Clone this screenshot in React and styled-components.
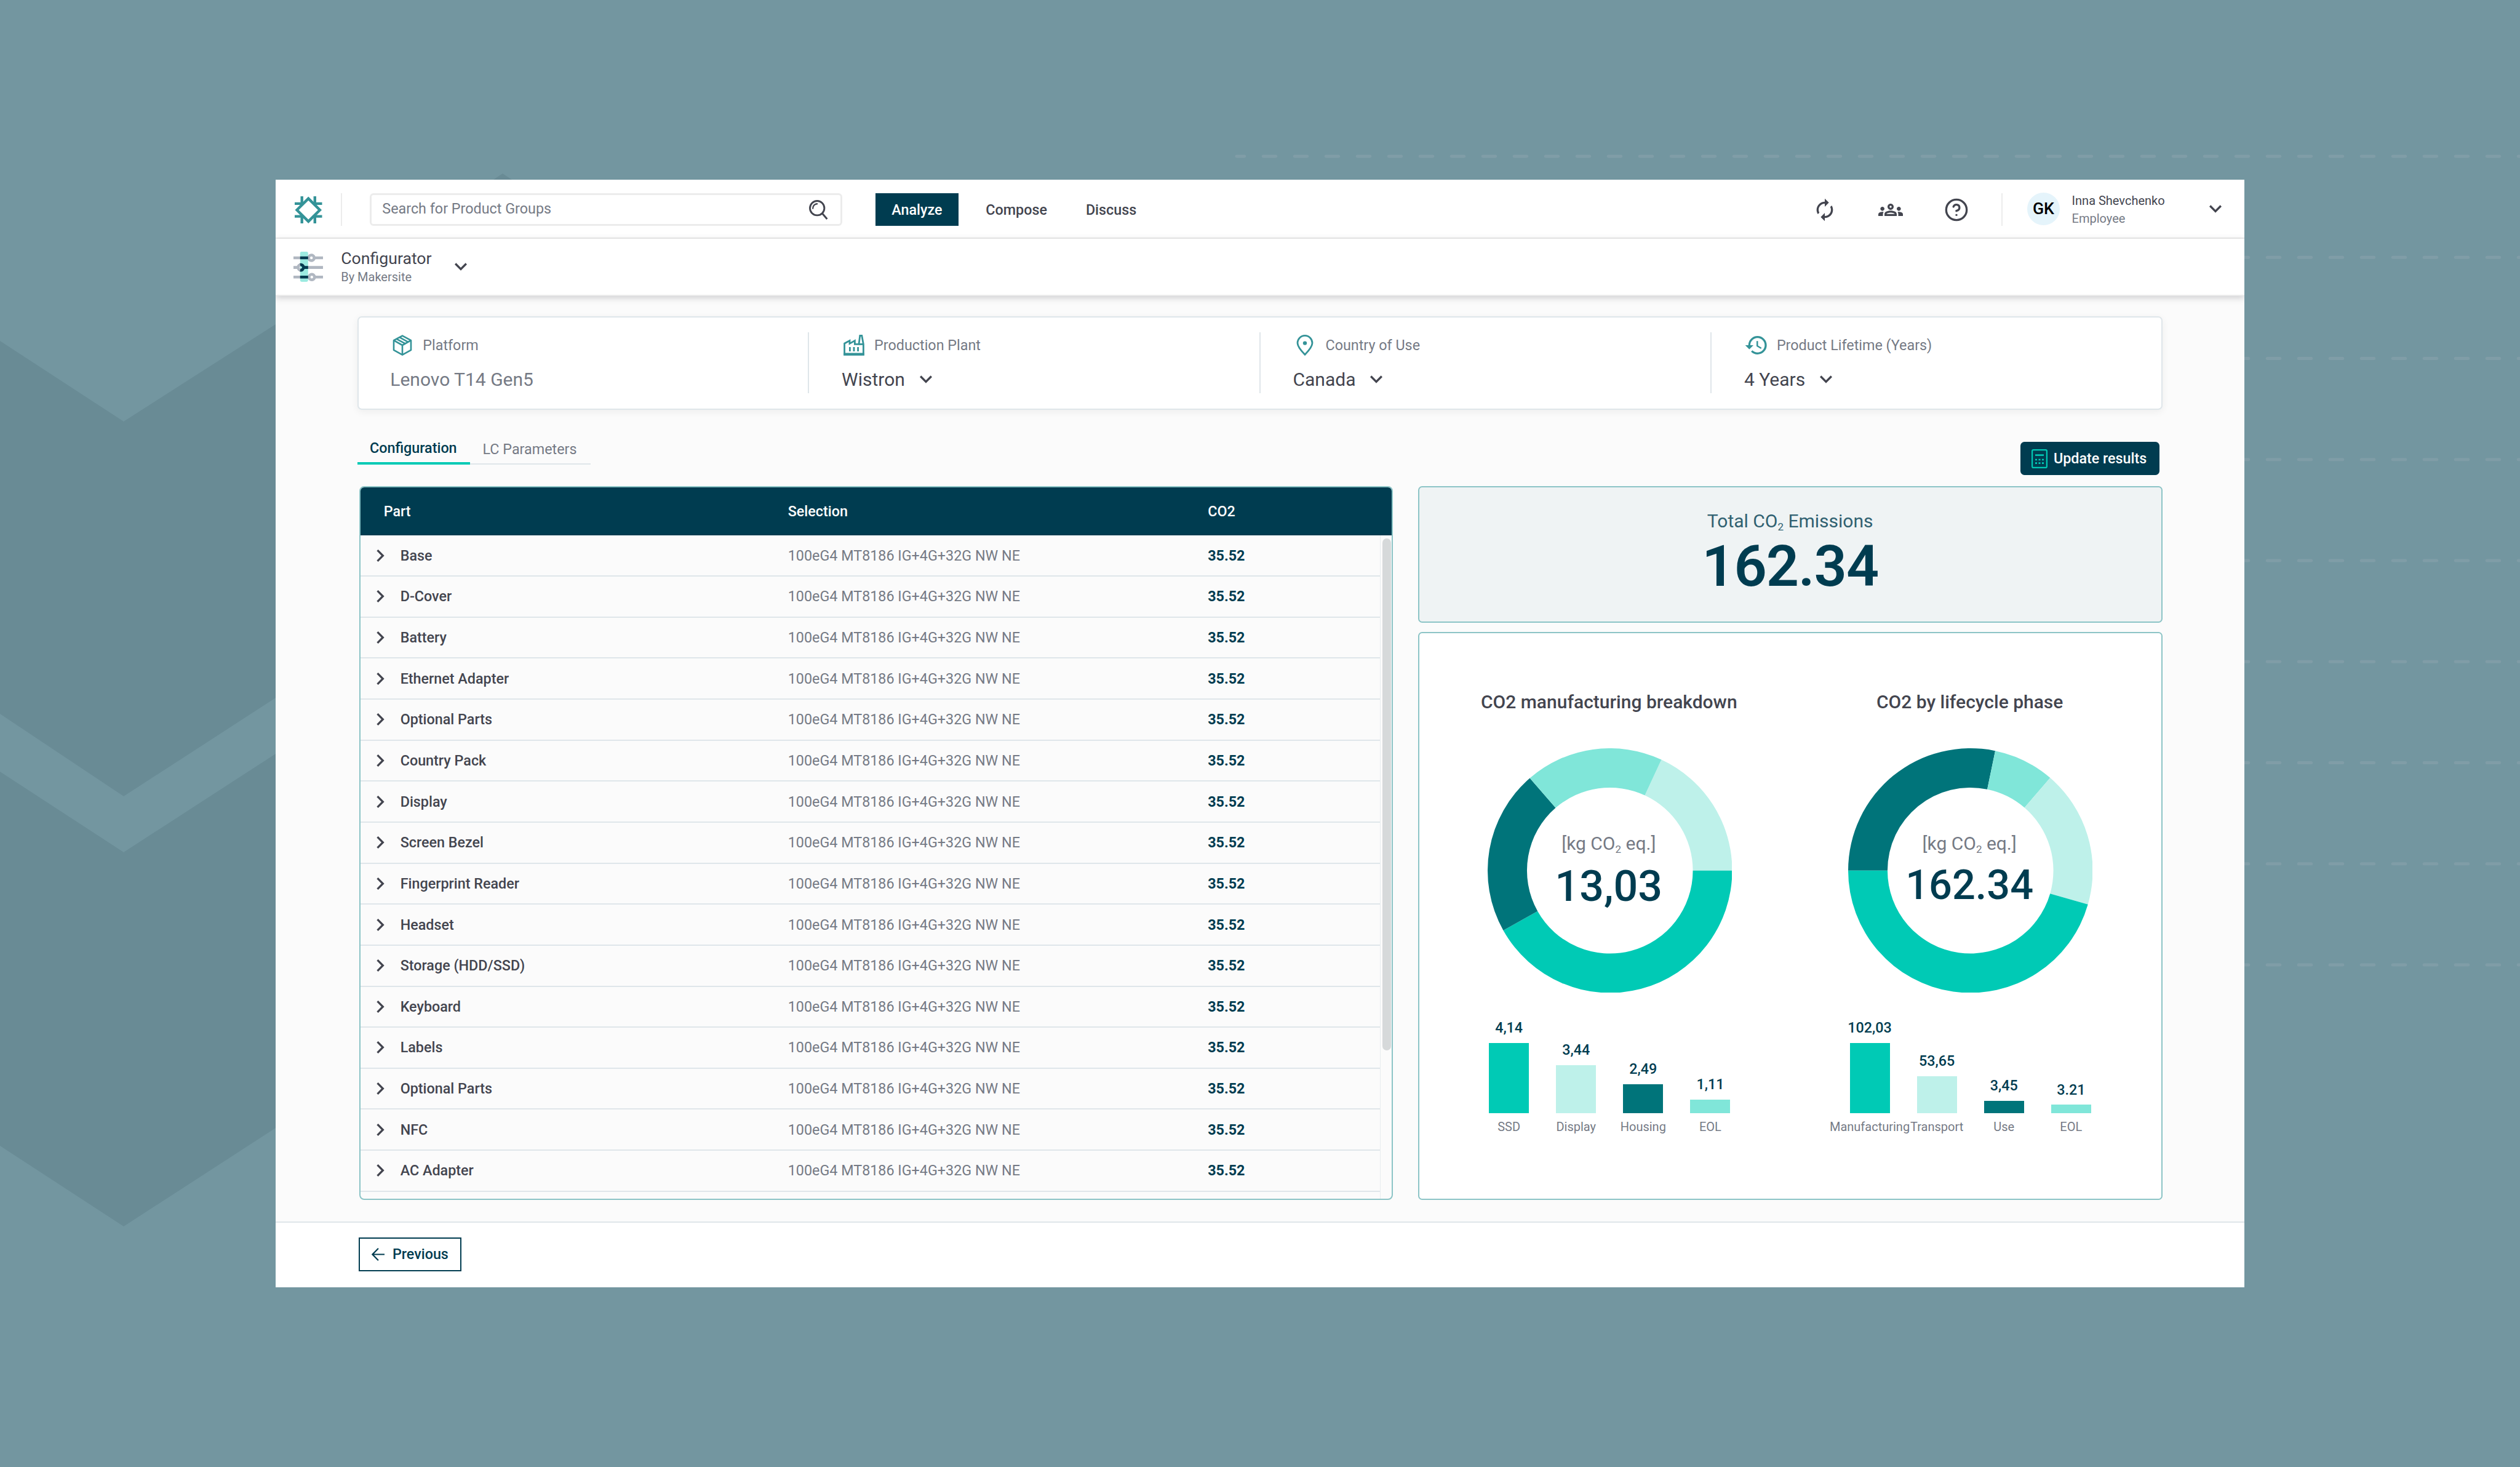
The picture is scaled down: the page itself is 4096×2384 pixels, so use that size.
import React from 'react';
import styled, { createGlobalStyle } from 'styled-components';
import {
  MdAutorenew,
  MdOutlineGroups,
  MdExpandMore,
  MdChevronRight,
  MdHistory,
} from 'react-icons/md';
import { FiHelpCircle } from 'react-icons/fi';

const parts = [
  'Base', 'D-Cover', 'Battery', 'Ethernet Adapter', 'Optional Parts', 'Country Pack',
  'Display', 'Screen Bezel', 'Fingerprint Reader', 'Headset', 'Storage (HDD/SSD)',
  'Keyboard', 'Labels', 'Optional Parts', 'NFC', 'AC Adapter',
];

const teal = '#00cab5';
const mint = '#80e6d9';
const pale = '#bef1ea';
const deep = '#00747a';

// slices are clockwise degrees from 12 o'clock
const charts = [
  {
    title: 'CO2 manufacturing breakdown',
    total: '13,03',
    size: 70,
    slices: [
      { from: 24.9, to: 90, color: pale },
      { from: 90, to: 240.7, color: teal },
      { from: 240.7, to: 319.1, color: deep },
      { from: 319.1, to: 384.9, color: mint },
    ],
    bars: [
      { label: 'SSD', value: '4,14', height: 114.3, color: teal },
      { label: 'Display', value: '3,44', height: 78.3, color: pale },
      { label: 'Housing', value: '2,49', height: 47.2, color: deep },
      { label: 'EOL', value: '1,11', height: 22.3, color: mint },
    ],
  },
  {
    title: 'CO2 by lifecycle phase',
    total: '162.34',
    size: 66.67,
    slices: [
      { from: 270, to: 371.7, color: deep },
      { from: 11.7, to: 40.7, color: mint },
      { from: 40.7, to: 106.1, color: pale },
      { from: 106.1, to: 270, color: teal },
    ],
    bars: [
      { label: 'Manufacturing', value: '102,03', height: 114.3, color: teal },
      { label: 'Transport', value: '53,65', height: 60.4, color: pale },
      { label: 'Use', value: '3,45', height: 20.5, color: deep },
      { label: 'EOL', value: '3.21', height: 13.8, color: mint },
    ],
  },
];

function slicePath(from, to) {
  const c = 198.75;
  const R = 198.75;
  const r = 134.8;
  const pt = (deg, rad) => {
    const a = (deg * Math.PI) / 180;
    return (c + rad * Math.sin(a)).toFixed(2) + ' ' + (c - rad * Math.cos(a)).toFixed(2);
  };
  const large = to - from > 180 ? 1 : 0;
  return `M${pt(from, R)}A${R} ${R} 0 ${large} 1 ${pt(to, R)}L${pt(to, r)}A${r} ${r} 0 ${large} 0 ${pt(from, r)}Z`;
}

function Logo() {
  return (
    <svg width="44.5" height="44.5" viewBox="0 0 44.5 44.5" fill="none" stroke="#349398" strokeWidth="4.4">
      <path d="M22.25 3.6L40.9 22.25L22.25 40.9L3.6 22.25Z" />
      <path d="M11.7 0V13.6M32.8 0V13.6M11.7 44.5V30.9M32.8 44.5V30.9M0 11.9H13.4M0 32.6H13.4M44.5 11.9H31.1M44.5 32.6H31.1" />
    </svg>
  );
}

function SearchIcon() {
  return (
    <svg width="31" height="32" viewBox="0 0 31 32" fill="none" stroke="#43454f" strokeWidth="2.9">
      <circle cx="13.2" cy="13.2" r="11.7" />
      <path d="M21.4 21.8L29.4 31" />
      <path d="M6.2 13.6A7.2 7.2 0 0 1 13 6.2" strokeWidth="2.4" strokeLinecap="round" />
    </svg>
  );
}

function SlidersIcon() {
  return (
    <svg width="48" height="49" viewBox="0 0 48 49" fill="none">
      <rect x="10.8" y="0" width="13" height="49" rx="2.4" fill="#9cebe1" />
      <g stroke="#b0b7c1" strokeWidth="4.6">
        <path d="M0 10H24M34 10H48M0 25.6H6M16 25.6H48M0 41.2H24M34 41.2H48" />
        <circle cx="29.2" cy="10" r="4.5" />
        <circle cx="12" cy="25.6" r="4.5" />
        <circle cx="29.8" cy="41.2" r="4.5" />
      </g>
      <g stroke="#003c50" strokeWidth="4.6">
        <path d="M10.8 10H23.8M10.8 41.2H23.8M17 25.6H23.8" />
        <path d="M10.9 21.2A4.5 4.5 0 1 1 10.9 30" />
      </g>
    </svg>
  );
}

function BoxIcon() {
  return (
    <svg width="40" height="40" viewBox="0 0 40 40" fill="none" stroke="#349398" strokeWidth="2.6" strokeLinejoin="round">
      <path d="M20 4.6L34 12.2V27.8L20 35.6L6 27.8V12.2Z" />
      <path d="M6 12.2L20 20L34 12.2M20 20V35.6M10.6 9.8L24.6 17.4M15.4 7.2L29.4 14.8" />
    </svg>
  );
}

function FactoryIcon() {
  return (
    <svg width="40" height="40" viewBox="0 0 40 40" fill="none" stroke="#349398" strokeWidth="2.8">
      <path d="M4.6 35.4V17.2L13 12.6V17.4L21.4 12.6V18.4H28L29.8 4.4H32.8L35.4 18.4V35.4Z" />
      <path d="M3.2 34.6H36.8" strokeWidth="4" />
      <path d="M28 18.4H35.4" />
      <path d="M13.4 23V30M20 23V30M26.6 23V30" />
    </svg>
  );
}

function PinIcon() {
  return (
    <svg width="40" height="40" viewBox="0 0 40 40" fill="none" stroke="#349398" strokeWidth="2.8">
      <path d="M20 35.2C12 27 8 21.4 8 16.4A12 12 0 0 1 32 16.4C32 21.4 28 27 20 35.2Z" />
      <circle cx="20" cy="16.6" r="3.2" fill="#349398" stroke="none" />
    </svg>
  );
}

function CalculatorIcon() {
  return (
    <svg width="26" height="31" viewBox="0 0 26 31" fill="none" stroke={teal} strokeWidth="2.2">
      <rect x="1.1" y="1.1" width="23.8" height="28.8" rx="2" />
      <path d="M6 9.6H20" strokeWidth="2.6" />
      <path d="M6 17H20M6 22.6H20" strokeWidth="2.6" strokeDasharray="3 2.5" />
    </svg>
  );
}

function ArrowLeftIcon() {
  return (
    <svg width="21" height="21" viewBox="0 0 21 21" fill="none" stroke="#003c50" strokeWidth="2.2">
      <path d="M21 10.5H1.4M10.9 0.8L1.4 10.5L10.9 20.2" />
    </svg>
  );
}

function Backdrop() {
  const lines = [253.9, 418.2, 582.4, 746.7, 911, 1075.2, 1239.5, 1403.7, 1568];
  return (
    <BackdropSvg viewBox="0 0 4096 2384">
      <path d="M0 554L201 685L448 527V1134L201 1294L0 1160Z" fill="#698b95" />
      <path d="M0 1254L201 1385L448 1225V1833L201 1993L0 1862Z" fill="#698b95" />
      <path d="M790 300L817 282L844 300Z" fill="#698b95" />
      {lines.map((y) => (
        <path
          key={y}
          d={`M2010 ${y}H4096`}
          stroke="#809da7"
          strokeWidth="5"
          strokeLinecap="round"
          strokeDasharray="20.5 30.5"
          strokeDashoffset="7.8"
        />
      ))}
    </BackdropSvg>
  );
}

function Donut({ chart }) {
  return (
    <DonutWrap>
      <svg width="397.5" height="397.5" viewBox="0 0 397.5 397.5">
        {chart.slices.map((s) => (
          <path key={s.from} d={slicePath(s.from, s.to)} fill={s.color} />
        ))}
      </svg>
      <DonutText>
        <Unit>[kg CO<Sub>2</Sub> eq.]</Unit>
        <DonutTotal $size={chart.size}>{chart.total}</DonutTotal>
      </DonutText>
    </DonutWrap>
  );
}

function Chart({ chart }) {
  return (
    <ChartColumn>
      <ChartTitle>{chart.title}</ChartTitle>
      <Donut chart={chart} />
      <Bars>
        {chart.bars.map((b) => (
          <BarItem key={b.label}>
            <BarValue>{b.value}</BarValue>
            <Bar $color={b.color} style={{ height: b.height }} />
            <BarLabel>{b.label}</BarLabel>
          </BarItem>
        ))}
      </Bars>
    </ChartColumn>
  );
}

class App extends React.Component {
  constructor(props) {
    super(props);
    this.state = {
      nav: 'Analyze',
      tab: 'Configuration',
    };
  }

  render() {
    const { nav, tab } = this.state;
    return (
      <Page>
        <GlobalStyle />
        <Backdrop />
        <Window>

          {/* Top bar */}
          <Header>
            <Logo />
            <Divider $left={30.6} />
            <Search>
              <span>Search for Product Groups</span>
              <SearchIcon />
            </Search>
            <Nav>
              {['Analyze', 'Compose', 'Discuss'].map((item) => (
                <NavButton key={item} $active={item === nav} onClick={() => this.setState({ nav: item })}>
                  {item}
                </NavButton>
              ))}
            </Nav>
            <Tools>
              <MdAutorenew />
              <MdOutlineGroups />
              <FiHelpCircle />
            </Tools>
            <Divider $left={53.3} />
            <Avatar>GK</Avatar>
            <User>
              <UserName>Inna Shevchenko</UserName>
              <UserRole>Employee</UserRole>
            </User>
            <HeaderChevron />
          </Header>

          {/* Which app is open */}
          <AppBar>
            <SlidersIcon />
            <AppName>
              <AppTitle>Configurator</AppTitle>
              <AppOwner>By Makersite</AppOwner>
            </AppName>
            <MdExpandMore />
          </AppBar>

          <Content>
            <Summary>
              <SummaryItem>
                <SummaryLabel><BoxIcon />Platform</SummaryLabel>
                <SummaryValue $muted>Lenovo T14 Gen5</SummaryValue>
              </SummaryItem>
              <SummaryItem>
                <SummaryLabel><FactoryIcon />Production Plant</SummaryLabel>
                <SummaryValue>Wistron<MdExpandMore /></SummaryValue>
              </SummaryItem>
              <SummaryItem>
                <SummaryLabel><PinIcon />Country of Use</SummaryLabel>
                <SummaryValue>Canada<MdExpandMore /></SummaryValue>
              </SummaryItem>
              <SummaryItem>
                <SummaryLabel><MdHistory />Product Lifetime (Years)</SummaryLabel>
                <SummaryValue>4 Years<MdExpandMore /></SummaryValue>
              </SummaryItem>
            </Summary>

            <Toolbar>
              <Tabs>
                {['Configuration', 'LC Parameters'].map((item) => (
                  <Tab key={item} $active={item === tab} onClick={() => this.setState({ tab: item })}>
                    {item}
                  </Tab>
                ))}
              </Tabs>
              <UpdateButton><CalculatorIcon />Update results</UpdateButton>
            </Toolbar>

            <Panels>
              <Table>
                <TableHead>
                  <span>Part</span>
                  <span>Selection</span>
                  <span>CO2</span>
                </TableHead>
                <TableBody>
                  <Rows>
                    {parts.map((name, i) => (
                      <Row key={i}>
                        <PartCell><MdChevronRight />{name}</PartCell>
                        <SelectionCell>100eG4 MT8186 IG+4G+32G NW NE</SelectionCell>
                        <Co2Cell>35.52</Co2Cell>
                      </Row>
                    ))}
                  </Rows>
                  <ScrollTrack><ScrollThumb /></ScrollTrack>
                </TableBody>
              </Table>

              <Results>
                <TotalCard>
                  <TotalTitle>Total CO<Sub>2</Sub> Emissions</TotalTitle>
                  <TotalValue>162.34</TotalValue>
                </TotalCard>
                <ChartCard>
                  {charts.map((c) => <Chart key={c.title} chart={c} />)}
                </ChartCard>
              </Results>
            </Panels>
          </Content>

          <Footer>
            <PreviousButton><ArrowLeftIcon />Previous</PreviousButton>
          </Footer>
        </Window>
      </Page>
    );
  }
}

const GlobalStyle = createGlobalStyle`
  * {
    box-sizing: border-box;
  }
  body {
    margin: 0;
    font-family: Roboto, sans-serif;
    font-size: 23.33px;
    color: #43454f;
  }
  button {
    font: inherit;
    border: 0;
    background: none;
    cursor: pointer;
  }
  svg {
    flex: none;
    display: block;
  }
`;

const Page = styled.div`
  position: relative;
  display: flex;
  align-items: center;
  justify-content: center;
  width: 4096px;
  height: 2384px;
  overflow: hidden;
  background: #7396a0;
`;

const BackdropSvg = styled.svg`
  position: absolute;
  inset: 0;
  width: 100%;
  height: 100%;
`;

const Window = styled.div`
  position: relative;
  display: flex;
  flex-direction: column;
  width: 3200px;
  height: 1800px;
  background: #fbfbfb;
  overflow: hidden;
`;

const Header = styled.div`
  display: flex;
  align-items: center;
  height: 95.5px;
  padding: 4px 27px 0 31.2px;
  background: #fff;
  border-bottom: 2px solid #ececec;
`;

const Divider = styled.div`
  width: 2px;
  height: 53.3px;
  margin-left: ${(p) => p.$left}px;
  background: #ececec;
`;

const Search = styled.div`
  display: flex;
  align-items: center;
  justify-content: space-between;
  width: 768px;
  height: 53.3px;
  margin-left: 45px;
  padding: 0 20.5px 0 17px;
  border: 3.3px solid #ececec;
  border-radius: 6px;
  color: #757a85;

  span {
    margin-top: -3px;
  }
`;

const Nav = styled.div`
  display: flex;
  margin-left: 53.3px;
`;

const NavButton = styled.button`
  height: 53.3px;
  padding: 0 26.7px;
  font-weight: 500;
  color: ${(p) => (p.$active ? '#fff' : '#43454f')};
  background: ${(p) => (p.$active ? '#003c50' : 'none')};

  & + & {
    margin-left: 9.6px;
  }
  &:nth-child(2) {
    margin-left: 17.4px;
  }
`;

const Tools = styled.div`
  display: flex;
  gap: 66.7px;
  margin-left: auto;
  font-size: 40px;
`;

const Avatar = styled.div`
  display: flex;
  align-items: center;
  justify-content: center;
  width: 53.4px;
  height: 53.4px;
  margin: -3px 0 0 39.8px;
  border-radius: 50%;
  background: #e5f4fb;
  color: #000;
  font-size: 26.67px;
  font-weight: 500;
`;

const User = styled.div`
  width: 213.4px;
  margin: 1px 0 0 19.5px;
  font-size: 20px;
  line-height: 28.9px;
`;

const UserName = styled.div`
  color: #43454f;
`;

const UserRole = styled.div`
  color: #757a85;
`;

const HeaderChevron = styled(MdExpandMore)`
  margin-top: -3px;
  font-size: 40px;
`;

const AppBar = styled.div`
  position: relative;
  display: flex;
  align-items: center;
  height: 93.3px;
  padding: 0 0 0 29px;
  background: #fff;
  border-bottom: 2px solid #ececec;
  box-shadow: 0 3px 10px rgba(67, 69, 80, 0.25);

  & > svg:last-child {
    width: 40px;
    height: 40px;
    margin-left: 27.8px;
  }
`;

const AppName = styled.div`
  margin: 2px 0 0 29.2px;
`;

const AppTitle = styled.div`
  font-size: 26.67px;
  line-height: 32px;
`;

const AppOwner = styled.div`
  font-size: 20px;
  line-height: 29px;
  color: #757a85;
`;

const Content = styled.div`
  flex: 1;
  padding: 32.9px 133.3px 0;
`;

const Summary = styled.div`
  display: grid;
  grid-template-columns: 730px 733.4px 733.4px 1fr;
  align-items: start;
  height: 152px;
  padding: 24.6px 0 0;
  background: #fff;
  border: 2px solid #dfe6ea;
  border-radius: 7px;
  box-shadow: 0 3px 13px rgba(0, 0, 0, 0.06);
`;

const SummaryItem = styled.div`
  height: 99px;
  padding: 1.2px 0 0 51px;

  & + & {
    padding-left: 52.8px;
    border-left: 2px solid #dfe6ea;
  }
`;

const SummaryLabel = styled.div`
  display: flex;
  align-items: center;
  gap: 13px;
  height: 40px;
  color: #757a85;

  svg {
    font-size: 40px;
    color: #349398;
  }
`;

const SummaryValue = styled.div`
  display: flex;
  align-items: center;
  gap: 14px;
  height: 40px;
  margin-top: 14.9px;
  font-size: 30px;
  color: ${(p) => (p.$muted ? '#757a85' : '#43454f')};

  svg {
    font-size: 40px;
  }
`;

const Toolbar = styled.div`
  display: flex;
  align-items: flex-start;
  justify-content: space-between;
  height: 124.3px;
  padding: 52.8px 4.7px 0 0;
`;

const Tabs = styled.div`
  display: flex;
  align-items: flex-end;
  height: 36.9px;
`;

const Tab = styled.button`
  width: ${(p) => (p.$active ? 183 : 195.5)}px;
  padding: 0 2px ${(p) => (p.$active ? 12.2 : 12.6)}px 0;
  line-height: 21px;
  font-weight: ${(p) => (p.$active ? 500 : 400)};
  color: ${(p) => (p.$active ? '#003c50' : '#757a85')};
  border-bottom: ${(p) => (p.$active ? '4px solid #00cab5' : '2px solid #dfe6ea')};
`;

const UpdateButton = styled.button`
  display: flex;
  align-items: center;
  gap: 9.5px;
  height: 53.4px;
  width: 225.6px;
  padding: 0 0 0 18px;
  border-radius: 6.5px;
  background: #003c50;
  color: #fff;
  font-weight: 500;
`;

const Panels = styled.div`
  display: grid;
  grid-template-columns: 1680px 1fr;
  column-gap: 40.4px;
  height: 1160.4px;
  margin-left: 3px;
`;

const Table = styled.div`
  display: flex;
  flex-direction: column;
  min-height: 0;
  border: 2px solid #8cc4c6;
  border-radius: 8px;
  overflow: hidden;
`;

const TableHead = styled.div`
  display: grid;
  grid-template-columns: 657px 682.5px 1fr;
  align-items: center;
  height: 78.3px;
  padding-left: 37.4px;
  background: #003c50;
  color: #fff;
  font-weight: 500;
`;

const TableBody = styled.div`
  display: flex;
  flex: 1;
`;

const Rows = styled.div`
  flex: 1;
`;

const Row = styled.div`
  display: grid;
  grid-template-columns: 694.4px 682.5px 1fr;
  align-items: center;
  height: 66.667px;
  border-bottom: 2px solid #dfe6ea;
`;

const PartCell = styled.div`
  display: flex;
  align-items: center;
  gap: 12.2px;
  padding-left: 12.2px;
  font-weight: 500;

  svg {
    font-size: 40px;
  }
`;

const SelectionCell = styled.div`
  color: #757a85;
`;

const Co2Cell = styled.div`
  color: #003c50;
  font-weight: 700;
`;

const ScrollTrack = styled.div`
  width: 19.4px;
  padding: 5px 0 0 2.6px;
  border-left: 1px solid #e8edef;
`;

const ScrollThumb = styled.div`
  width: 14px;
  height: 831.5px;
  border-radius: 7px;
  background: #d6d9da;
`;

const Results = styled.div`
  display: flex;
  flex-direction: column;
  gap: 14.6px;
`;

const TotalCard = styled.div`
  display: flex;
  flex-direction: column;
  align-items: center;
  height: 222.3px;
  padding-top: 36.7px;
  border: 2px solid #8cc4c6;
  border-radius: 6.5px;
  background: #eff3f4;
`;

const TotalTitle = styled.div`
  font-size: 30px;
  line-height: 36px;
  color: #306171;
`;

const TotalValue = styled.div`
  font-size: 93.33px;
  line-height: 111px;
  font-weight: 600;
  letter-spacing: -1px;
  color: #003c50;
`;

const Sub = styled.span`
  font-size: 17px;
  line-height: 0;
  vertical-align: -4.6px;
`;

const ChartCard = styled.div`
  display: grid;
  grid-template-columns: 586.4px 586.4px;
  flex: 1;
  padding: 94px 16.4px 0;
  border: 2px solid #8cc4c6;
  border-radius: 6.5px;
  background: #fff;
`;

const ChartColumn = styled.div`
  display: flex;
  flex-direction: column;
  align-items: center;
`;

const ChartTitle = styled.div`
  padding-right: 2px;
  font-size: 30px;
  line-height: 36px;
  font-weight: 500;
`;

const DonutWrap = styled.div`
  display: grid;
  margin-top: 56.8px;

  & > * {
    grid-area: 1 / 1;
  }
`;

const DonutText = styled.div`
  display: flex;
  flex-direction: column;
  align-items: center;
  padding: 137px 3px 0 0;
`;

const Unit = styled.div`
  font-size: 30px;
  line-height: 36px;
  color: #757a85;
`;

const DonutTotal = styled.div`
  margin-top: 11px;
  font-size: ${(p) => p.$size}px;
  line-height: 1.15;
  font-weight: 500;
  color: #003c50;
`;

const Bars = styled.div`
  display: flex;
  align-items: flex-end;
  gap: 44.1px;
  height: 230px;
`;

const BarItem = styled.div`
  display: flex;
  flex-direction: column;
  align-items: center;
  width: 65px;
  white-space: nowrap;
`;

const BarValue = styled.div`
  line-height: 28px;
  font-weight: 500;
  color: #003c50;
`;

const Bar = styled.div`
  width: 100%;
  margin-top: 10.7px;
  background: ${(p) => p.$color};
`;

const BarLabel = styled.div`
  margin-top: 10px;
  font-size: 20px;
  line-height: 24px;
  color: #757a85;
`;

const Footer = styled.div`
  display: flex;
  align-items: center;
  height: 107.2px;
  padding: 0 0 2px 135.4px;
  border-top: 2px solid #dfe6ea;
  background: #fff;
`;

const PreviousButton = styled.button`
  display: flex;
  align-items: center;
  gap: 12.6px;
  width: 167px;
  height: 55px;
  padding: 0 0 0 18.9px;
  border: 2px solid #003c50;
  color: #003c50;
  font-weight: 500;
`;

export default App;
